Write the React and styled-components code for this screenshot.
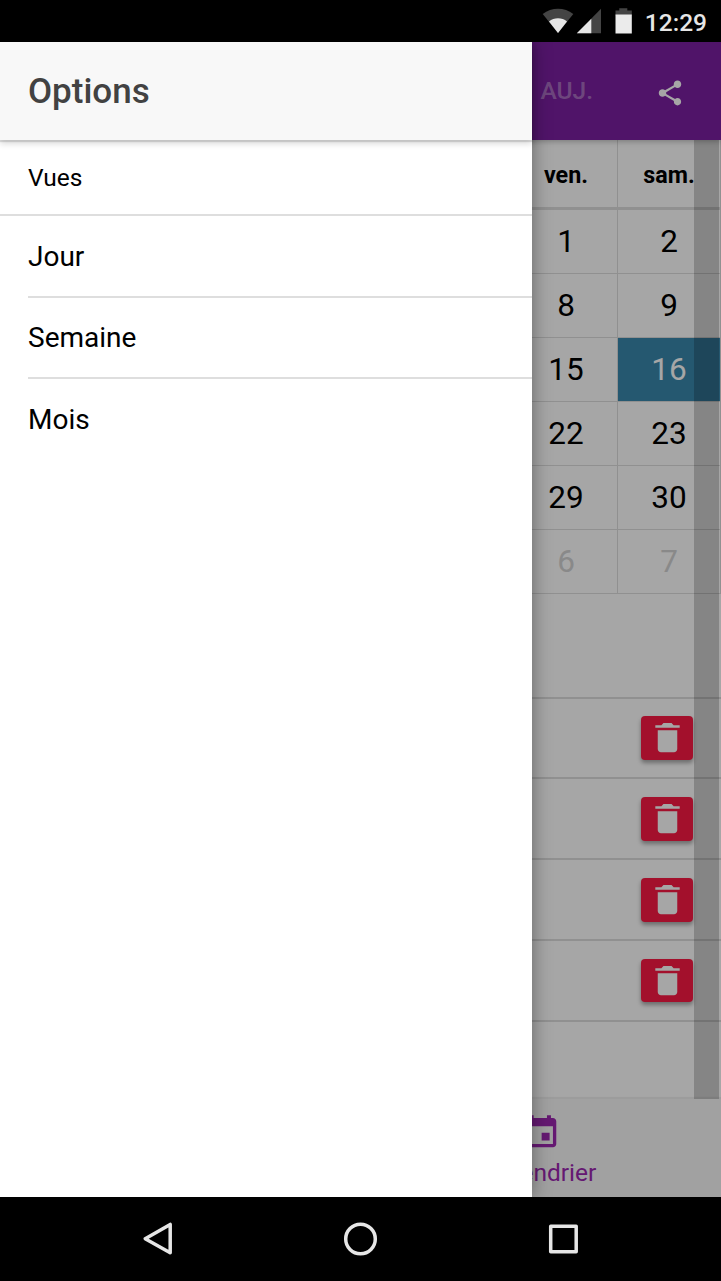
import React from "react";
import styled, { createGlobalStyle } from "styled-components";
import { IoMdTrash, IoMdCalendar } from "react-icons/io";
import { MdShare } from "react-icons/md";

const GlobalStyle = createGlobalStyle`
  * { box-sizing: border-box; }
  body { margin: 0; background: #000; font-family: Roboto, sans-serif; color: #000; }
`;

const Phone = styled.div`
  width: 721px;
  height: 1281px;
  display: flex;
  flex-direction: column;
  overflow: hidden;
  background: #000;
`;

const StatusBar = styled.div`
  height: 42px;
  flex: none;
  display: flex;
  justify-content: flex-end;
  align-items: flex-start;
  padding: 8px 14px 0 0;
  background: #000;
`;

const StatusIcons = styled.svg`
  display: block;
  margin-right: 11px;
`;

const Clock = styled.span`
  color: #e6e6e6;
  font-size: 24.5px;
  font-weight: 500;
  line-height: 29px;
`;

const Viewport = styled.div`
  position: relative;
  height: 1155px;
  flex: none;
  overflow: hidden;
`;

const Page = styled.div`
  height: 100%;
  display: flex;
  flex-direction: column;
  background: #fff;
`;

const AppBar = styled.header`
  position: relative;
  z-index: 1;
  height: 98px;
  flex: none;
  display: flex;
  align-items: center;
  justify-content: flex-end;
  padding-right: 36.5px;
  background: #7b1fa2;
  color: #fff;
  box-shadow: 0 1px 6px rgba(0, 0, 0, 0.3);
`;

const TodayButton = styled.span`
  font-size: 24.5px;
  font-weight: 500;
  line-height: 28px;
  color: rgba(255, 255, 255, 0.36);
  margin-right: 61.5px;
`;

const ShareIcon = styled(MdShare)`
  font-size: 30px;
  margin-top: 3px;
`;

const Content = styled.main`
  position: relative;
  flex: 1;
  min-height: 0;
`;

const ScrollTrack = styled.div`
  position: absolute;
  top: 0;
  bottom: 0;
  right: 2px;
  width: 25px;
  background: rgba(0, 0, 0, 0.2);
`;

const WeekRow = styled.div`
  display: grid;
  grid-template-columns: repeat(7, 1fr);
`;

const DayName = styled.div`
  grid-column: ${(p) => p.$column};
  height: 70px;
  display: flex;
  align-items: center;
  justify-content: center;
  padding-top: 3px;
  border-right: 1px solid #ddd;
  border-bottom: 3px solid #ddd;
  font-size: 23.3px;
  font-weight: 700;
`;

const DayCell = styled.div`
  grid-column: ${(p) => p.$column};
  height: 64px;
  display: flex;
  align-items: center;
  justify-content: center;
  border-right: 1px solid #ddd;
  border-bottom: 1px solid #ddd;
  font-size: 31.5px;
  color: ${(p) => (p.$selected ? "#fff" : p.$muted ? "#d3d3d3" : "#000")};
  background: ${(p) => (p.$selected ? "#3a87ad" : "transparent")};
`;

const EventList = styled.div`
  margin-top: 103px;
  border-top: 2px solid #dedede;
`;

const EventRow = styled.div`
  height: ${(p) => p.$height}px;
  display: flex;
  align-items: flex-start;
  justify-content: flex-end;
  padding: ${(p) => p.$top}px 28px 0 0;
  border-bottom: 2px solid #dedede;
`;

const DeleteButton = styled.div`
  width: 52px;
  height: ${(p) => p.$height}px;
  display: flex;
  align-items: center;
  justify-content: center;
  padding: 0 0 1px;
  border-radius: 4px;
  background: #fa1a44;
  color: #fff;
  font-size: 39px;
  box-shadow: 0 3px 4px rgba(0, 0, 0, 0.35);
`;

const TabBar = styled.nav`
  height: 98px;
  flex: none;
  display: grid;
  grid-template-columns: 1fr 1fr;
  background: #f8f8f8;
  box-shadow: 0 -2px 1px rgba(0, 0, 0, 0.06);
`;

const Tab = styled.div`
  grid-column: 2;
  display: flex;
  flex-direction: column;
  align-items: center;
  padding-top: 11px;
  color: #9c27b0;
  font-size: 24.5px;
  line-height: 28px;
`;

const CalendarIcon = styled(IoMdCalendar)`
  font-size: 42.6px;
  margin-bottom: 6.5px;
`;

const Backdrop = styled.div`
  position: absolute;
  inset: 0;
  z-index: 2;
  background: rgba(0, 0, 0, 0.35);
`;

const Drawer = styled.aside`
  position: absolute;
  top: 0;
  bottom: 0;
  left: 0;
  z-index: 3;
  width: 532px;
  background: #fff;
  box-shadow: 0 0 18px rgba(0, 0, 0, 0.4);
`;

const DrawerHeader = styled.header`
  height: 98px;
  display: flex;
  align-items: center;
  padding-left: 28px;
  background: #f8f8f8;
  box-shadow: 0 2px 1px rgba(0, 0, 0, 0.12), 0 4px 6px rgba(0, 0, 0, 0.14);
  color: #424242;
  font-size: 35px;
  font-weight: 500;
`;

const ListHeader = styled.div`
  height: 76px;
  display: flex;
  align-items: center;
  padding-left: 28px;
  border-bottom: 2px solid #dedede;
  font-size: 24.5px;
`;

const MenuItem = styled.div`
  height: ${(p) => p.$height}px;
  margin-left: 28px;
  display: flex;
  align-items: center;
  border-bottom: ${(p) => (p.$last ? "none" : "2px solid #dedede")};
  font-size: 28px;
`;

const NavBar = styled.footer`
  height: 84px;
  flex: none;
  display: flex;
  justify-content: space-between;
  align-items: center;
  padding: 0 141px 0 140px;
  background: #000;
`;

const NavIcon = styled.svg`
  display: block;
  fill: none;
  stroke: #e6e6e6;
  stroke-width: 3.5;
  stroke-linejoin: round;
`;

const weeks = [
  ["1", "2"],
  ["8", "9"],
  ["15", "16"],
  ["22", "23"],
  ["29", "30"],
  ["6", "7"],
];

const events = [
  { height: 80, top: 17, button: 44 },
  { height: 81, top: 18, button: 44 },
  { height: 81, top: 18, button: 44 },
  { height: 81, top: 18, button: 43 },
];

export default function App() {
  return (
    <>
      <GlobalStyle />
      <Phone>
        <StatusBar>
          <StatusIcons width="92" height="27" viewBox="0 0 92 27">
            <path d="M0.7 6C9.5-1.1 22.5-1.1 31.3 6L16 25Z" fill="#444" />
            <path d="M7 13.5C12 9.3 20 9.3 25 13.5L16 25Z" fill="#e6e6e6" />
            <path d="M59 0.8V25.3H34.8Z" fill="#444" />
            <path d="M49.3 10.8V25.3H34.8Z" fill="#e6e6e6" />
            <path d="M77.3 0.3h8v2.2h4.5v5H73.5v-5h3.8Z" fill="#444" />
            <path d="M73.5 6.5h16.3v19H73.5Z" fill="#ebebeb" />
          </StatusIcons>
          <Clock>12:29</Clock>
        </StatusBar>

        <Viewport>
          <Page>
            <AppBar>
              <TodayButton>AUJ.</TodayButton>
              <ShareIcon />
            </AppBar>
            <Content>
              <WeekRow>
                <DayName $column={6}>ven.</DayName>
                <DayName $column={7}>sam.</DayName>
              </WeekRow>
              {weeks.map(([friday, saturday], i) => (
                <WeekRow key={friday}>
                  <DayCell $column={6} $muted={i === 5}>{friday}</DayCell>
                  <DayCell $column={7} $muted={i === 5} $selected={saturday === "16"}>
                    {saturday}
                  </DayCell>
                </WeekRow>
              ))}
              <EventList>
                {events.map(({ height, top, button }, i) => (
                  <EventRow key={i} $height={height} $top={top}>
                    <DeleteButton $height={button}>
                      <IoMdTrash />
                    </DeleteButton>
                  </EventRow>
                ))}
              </EventList>
              <ScrollTrack />
            </Content>
            <TabBar>
              <Tab>
                <CalendarIcon />
                Calendrier
              </Tab>
            </TabBar>
          </Page>
          <Backdrop />
          <Drawer>
            <DrawerHeader>Options</DrawerHeader>
            <ListHeader>Vues</ListHeader>
            <MenuItem $height={82}>Jour</MenuItem>
            <MenuItem $height={81}>Semaine</MenuItem>
            <MenuItem $height={81} $last>Mois</MenuItem>
          </Drawer>
        </Viewport>

        <NavBar>
          <NavIcon width="36" height="36" viewBox="0 0 36 36">
            <path d="M30.2 3.4V31.8L5.2 17.7Z" />
          </NavIcon>
          <NavIcon width="36" height="36" viewBox="0 0 36 36">
            <circle cx="18.5" cy="18" r="14.8" />
          </NavIcon>
          <NavIcon width="36" height="36" viewBox="0 0 36 36">
            <rect x="6.7" y="5.2" width="25.5" height="25.5" />
          </NavIcon>
        </NavBar>
      </Phone>
    </>
  );
}
